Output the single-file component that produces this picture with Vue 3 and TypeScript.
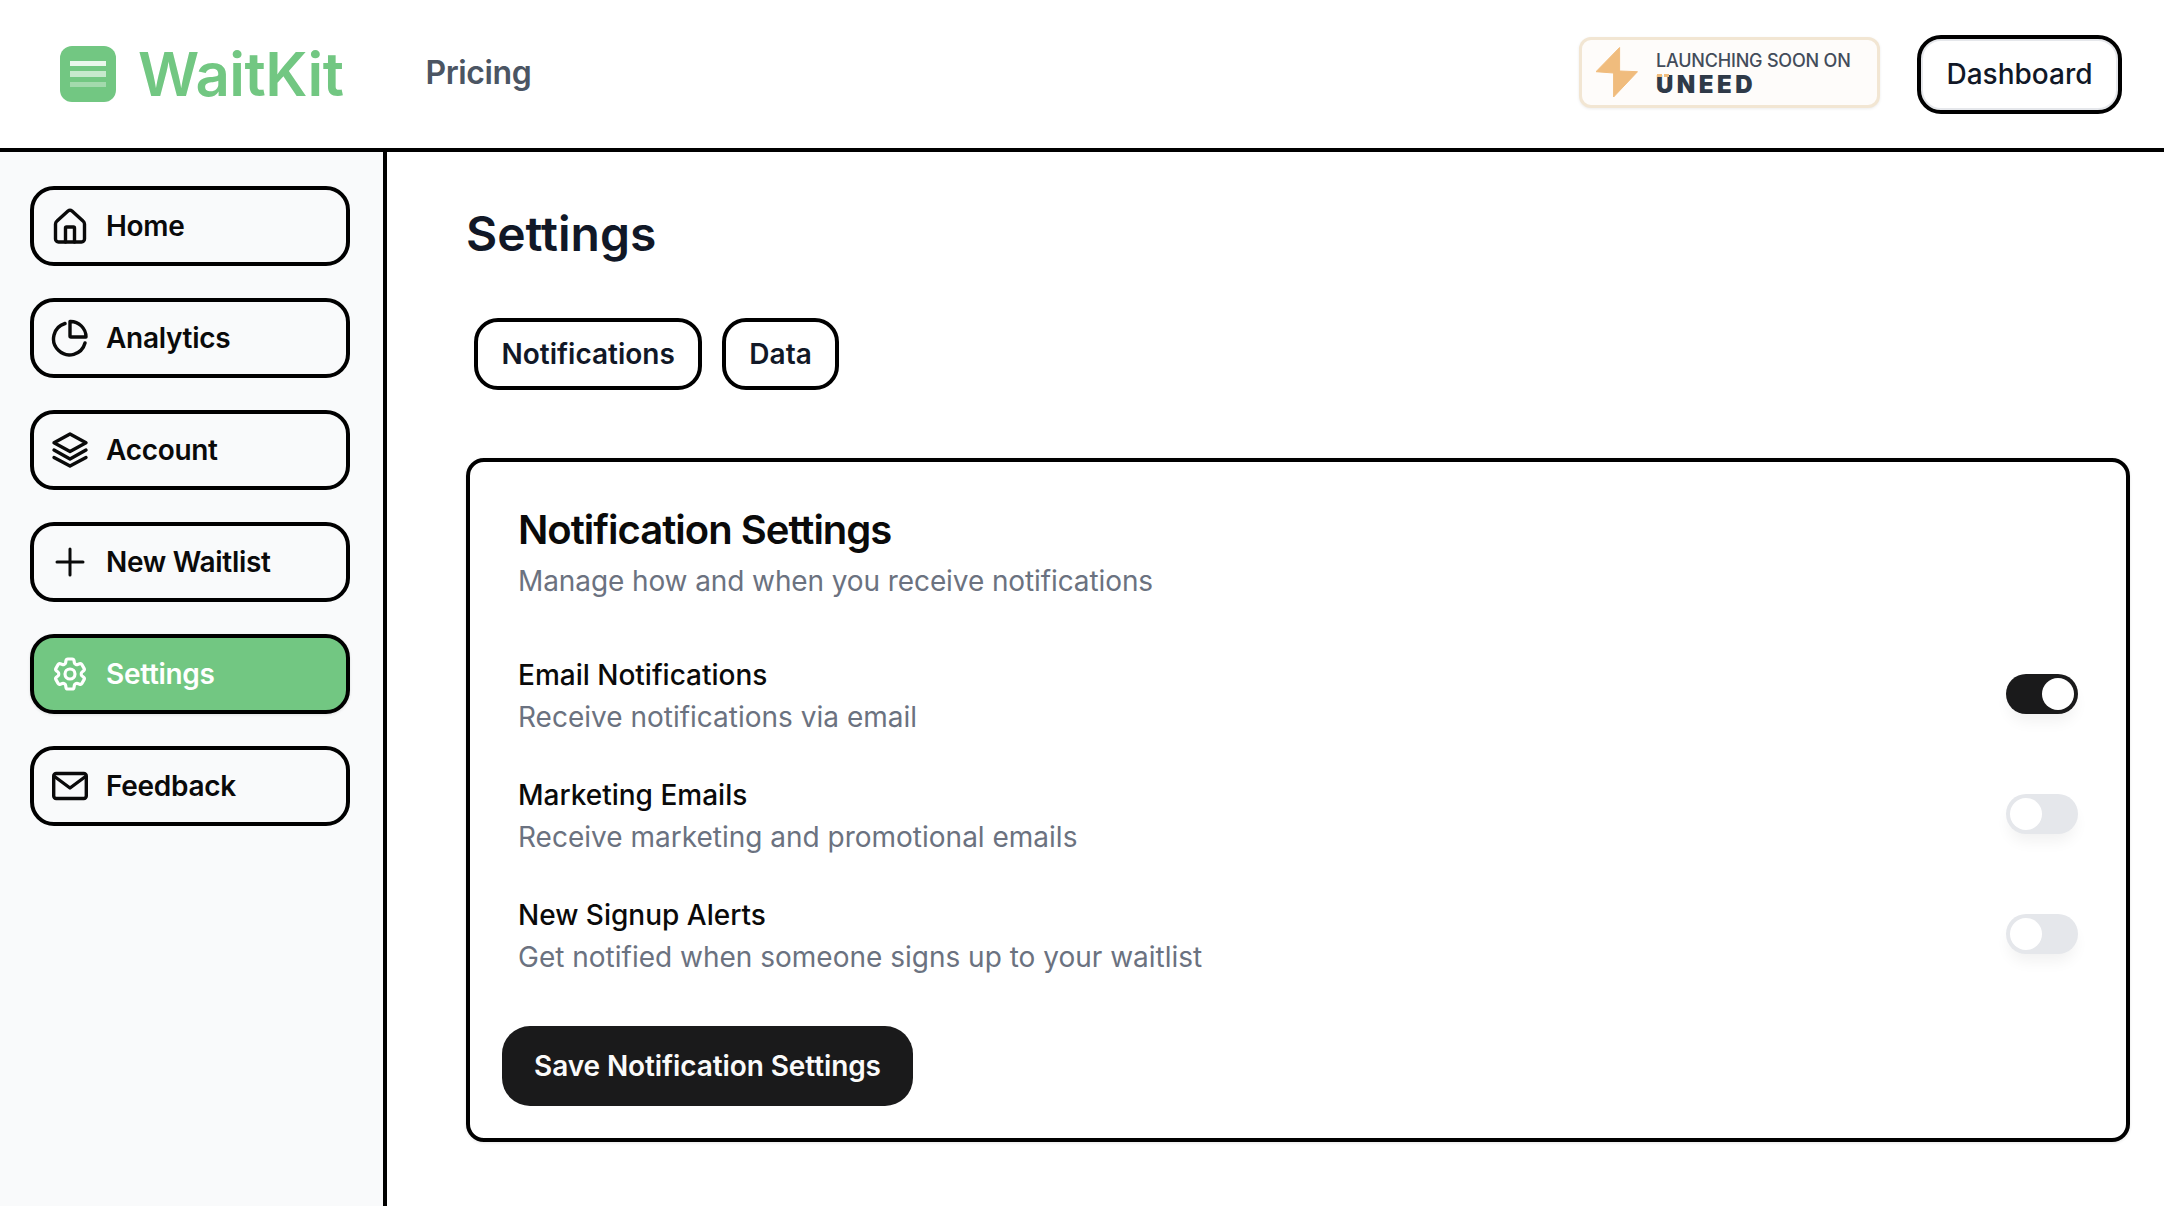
<script setup lang="ts">
interface Row { title: string; desc: string; on: boolean }
const nav = ['Home', 'Analytics', 'Account', 'New Waitlist', 'Settings', 'Feedback']
const rows: Row[] = [
  { title: 'Email Notifications', desc: 'Receive notifications via email', on: true },
  { title: 'Marketing Emails', desc: 'Receive marketing and promotional emails', on: false },
  { title: 'New Signup Alerts', desc: 'Get notified when someone signs up to your waitlist', on: false },
]
</script>

<template>
  <div class="app">
    <header class="header">
      <div class="brand">
        <span class="logo"><i class="b1"></i><i class="b2"></i><i class="b3"></i></span>
        <span class="word">WaitKit</span>
      </div>
      <a class="pricing">Pricing</a>
      <div class="spacer"></div>
      <div class="badge">
        <svg class="bolt" viewBox="0 0 42 50" width="42" height="50"><path d="M23.6 0.5V24L41.5 24.7 17.6 50V26L0 24.7Z" fill="#f0bc7d" stroke="#f0bc7d" stroke-width="1" stroke-linejoin="round"/></svg>
        <div class="badge-text">
          <span class="launch">LAUNCHING SOON ON</span>
          <span class="uneed">UNEED<i class="dot d1"></i><i class="dot d2"></i></span>
        </div>
      </div>
      <button class="dash">Dashboard</button>
    </header>
    <div class="body">
      <aside class="side">
        <a v-for="n in nav" :key="n" class="nav" :class="{ active: n === 'Settings' }">
          <svg class="ico" viewBox="0 0 40 40" fill="none" stroke="currentColor" stroke-width="3.4" stroke-linecap="round" stroke-linejoin="round">
            <template v-if="n === 'Home'">
              <path d="M18 5.100a3 3 0 0 1 4 0L33 15a4 4 0 0 1 1.500 3V33a3 3 0 0 1-3 3H8.500a3 3 0 0 1-3-3V18a4 4 0 0 1 1.500-3Z"/>
              <path d="M15.500 36V22a1 1 0 0 1 1-1H23.500a1 1 0 0 1 1 1V36"/>
            </template>
            <template v-else-if="n === 'Analytics'">
              <path d="M15 5.500A16 16 0 1 0 35 25"/>
              <path d="M20 3.500A15.500 15.500 0 0 1 36 19H21a1 1 0 0 1-1-1Z"/>
            </template>
            <template v-else-if="n === 'Account'">
              <path d="M20 4 36 12.800 20 21.500 4 12.800Z"/>
              <path d="M4 20 20 29 36 20"/>
              <path d="M4 27.500 20 36 36 27.500"/>
            </template>
            <template v-else-if="n === 'New Waitlist'">
              <path stroke-width="3" d="M20 7V33M7 20H33"/>
            </template>
            <template v-else-if="n === 'Settings'">
              <g transform="scale(1.6667)" stroke-width="1.9">
                <path d="M9.594 3.94c.09-.542.56-.94 1.11-.94h2.593c.55 0 1.02.398 1.11.94l.213 1.281c.063.374.313.686.645.87.074.04.147.083.22.127.325.196.72.257 1.075.124l1.217-.456a1.125 1.125 0 0 1 1.37.49l1.296 2.247a1.125 1.125 0 0 1-.26 1.431l-1.003.827c-.293.241-.438.613-.43.992a7.723 7.723 0 0 1 0 .255c-.008.378.137.75.43.991l1.004.827c.424.35.534.955.26 1.43l-1.298 2.247a1.125 1.125 0 0 1-1.369.491l-1.217-.456c-.355-.133-.75-.072-1.076.124a6.47 6.47 0 0 1-.22.128c-.331.183-.581.495-.644.869l-.213 1.281c-.09.543-.56.94-1.11.94h-2.594c-.55 0-1.019-.398-1.11-.94l-.213-1.281c-.062-.374-.312-.686-.644-.87a6.52 6.52 0 0 1-.22-.127c-.325-.196-.72-.257-1.076-.124l-1.217.456a1.125 1.125 0 0 1-1.369-.49l-1.297-2.247a1.125 1.125 0 0 1 .26-1.431l1.004-.827c.292-.24.437-.613.43-.991a6.932 6.932 0 0 1 0-.255c.007-.38-.138-.751-.43-.992l-1.004-.827a1.125 1.125 0 0 1-.26-1.43l1.297-2.247a1.125 1.125 0 0 1 1.37-.491l1.216.456c.356.133.751.072 1.076-.124.072-.044.146-.086.22-.128.332-.183.582-.495.644-.869l.214-1.28Z"/>
                <path d="M15 12a3 3 0 1 1-6 0 3 3 0 0 1 6 0Z"/>
              </g>
            </template>
            <template v-else>
              <rect x="3.700" y="7.500" width="32.600" height="25" rx="2.500"/>
              <path d="M4.500 10.500 20 22 35.500 10.500"/>
            </template>
          </svg>
          <span>{{ n }}</span>
        </a>
      </aside>
      <main class="main">
        <h1 class="h1">Settings</h1>
        <div class="tabs">
          <button class="tab">Notifications</button>
          <button class="tab">Data</button>
        </div>
        <section class="card">
          <div class="card-head">
            <h2 class="h2">Notification Settings</h2>
            <p class="sub">Manage how and when you receive notifications</p>
          </div>
          <div class="rows">
            <div v-for="r in rows" :key="r.title" class="row">
              <div>
                <div class="rt">{{ r.title }}</div>
                <div class="rd">{{ r.desc }}</div>
              </div>
              <span class="toggle" :class="{ on: r.on }"><i class="knob"></i></span>
            </div>
          </div>
          <button class="save">Save Notification Settings</button>
        </section>
      </main>
    </div>
  </div>
</template>

<style>
html, body { margin: 0; background: #fff; }
</style>

<style scoped>
.app { width: 2164px; height: 1206px; overflow: hidden; display: flex; flex-direction: column; font-family: "Inter", "Liberation Sans", sans-serif; color: #111827; }
.header { height: 148px; flex: none; box-sizing: content-box; border-bottom: 4px solid #000; display: flex; align-items: center; padding: 0 42px 0 60px; }
.brand { display: flex; align-items: center; gap: 22px; }
.logo { width: 56px; height: 56px; border-radius: 12px; background: #72c782; display: flex; flex-direction: column; justify-content: center; align-items: center; gap: 5px; }
.logo i { display: block; width: 36px; height: 5.5px; background: #fff; }
.b1 { opacity: .85; } .b2 { opacity: .6; } .b3 { opacity: .35; }
.word { font-size: 60px; font-weight: 600; color: #72c782; letter-spacing: -.5px; line-height: 1; }
.pricing { margin: 0 0 4px 82px; font-size: 32px; font-weight: 600; letter-spacing: -.4px; color: #4b5563; }
.spacer { flex: 1; }
.badge { width: 301px; height: 71px; box-sizing: border-box; border: 3px solid #f2e6d3; border-radius: 12px; background: #fefcfa; display: flex; align-items: center; padding-left: 14px; gap: 18px; box-shadow: 0 1px 3px rgba(0,0,0,.08); margin: 0 37px 4px 0; }
.bolt { flex: none; }
.badge-text { display: flex; flex-direction: column; gap: 1px; }
.launch { font-size: 18px; font-weight: 500; letter-spacing: -.2px; color: #434c5a; line-height: 22px; white-space: nowrap; }
.uneed { position: relative; font-size: 24px; font-weight: 900; color: #2f3a48; line-height: 22px; letter-spacing: 3.500px; width: fit-content; top: 1px; }
.dot { position: absolute; top: 0; width: 5px; height: 3px; background: #f0bc7d; }
.d1 { left: 1px; } .d2 { left: 8px; }
.dash { width: 205px; height: 79px; box-sizing: border-box; border: 4px solid #000; border-radius: 24px; background: #fff; box-shadow: inset 0 0 0 2px #e5e7eb; font: 500 28px "Inter", sans-serif; color: #111827; padding: 0; }
.body { flex: 1; display: flex; min-height: 0; }
.side { flex: none; background: #f9fafb; border-right: 4px solid #000; padding: 34px 0 0 30px; box-sizing: border-box; width: 387px; display: flex; flex-direction: column; gap: 32px; }
.nav { width: 320px; height: 80px; box-sizing: border-box; border: 4px solid #000; border-radius: 24px; display: flex; align-items: center; padding-left: 16px; gap: 16px; font-size: 28px; font-weight: 600; letter-spacing: -.3px; color: #0a0a0a; }
.nav.active { background: #72c782; color: #fff; box-shadow: 0 1px 3px rgba(0,0,0,.1); }
.ico { width: 40px; height: 40px; flex: none; }
.main { flex: 1; min-width: 0; padding: 0 34px 0 79px; }
.h1 { margin: 50px 0 0; font-size: 48px; font-weight: 600; line-height: 64px; color: #111827; }
.tabs { display: flex; gap: 20px; margin: 52px 0 0 8px; }
.tab { height: 72px; box-sizing: border-box; padding: 0 23.500px; border: 4px solid #000; border-radius: 24px; background: #fff; font: 600 28px "Inter", sans-serif; color: #111827; }
.tab + .tab { padding: 0 23px; }
.card { margin-top: 68px; height: 684px; box-sizing: border-box; border: 4px solid #000; border-radius: 18px; box-shadow: 0 1px 3px rgba(0,0,0,.1); padding: 0 32px; background: #fff; }
.card-head { padding: 43px 16px 0 16px; }
.h2 { margin: 0; font-size: 40px; font-weight: 600; line-height: 50px; letter-spacing: -1px; color: #0a0a0a; }
.sub { margin: 6px 0 0; font-size: 28px; line-height: 40px; letter-spacing: -.1px; color: #6b7280; }
.rows { margin-top: 55px; padding: 0 16px; display: flex; flex-direction: column; gap: 40px; }
.row { display: flex; justify-content: space-between; align-items: center; height: 80px; }
.rt { font-size: 28px; font-weight: 500; line-height: 40px; color: #0a0a0a; }
.rd { font-size: 28px; line-height: 40px; color: #6b7280; margin-top: 2px; }
.toggle { position: relative; display: block; width: 72px; height: 40px; border-radius: 20px; background: #e5e7eb; box-shadow: 0 10px 15px -3px rgba(0,0,0,.06); margin-bottom: 4px; }
.toggle.on { background: #1a1a1b; }
.knob { position: absolute; top: 4px; left: 4px; width: 32px; height: 32px; border-radius: 50%; background: #fff; }
.on .knob { left: 36px; }
.save { margin-top: 50px; width: 411px; height: 80px; border: 0; border-radius: 28px; background: #1a1a1b; color: #fafafa; font: 600 28px "Inter", sans-serif; letter-spacing: -.1px; padding: 0; }
</style>
